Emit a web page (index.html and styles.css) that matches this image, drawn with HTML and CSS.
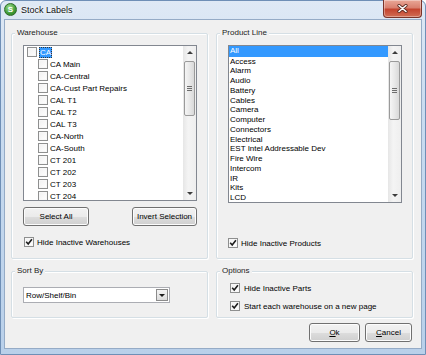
FILE: index.html
```html
<!DOCTYPE html>
<html lang="en">
<head>
  <meta charset="UTF-8" />
  <title>Stock Labels</title>
  <link rel="stylesheet" href="styles.css">
</head>
<body>
  <div class="window">
    <div class="titlebar">
      <span class="app-icon">S</span>
      <span class="title">Stock Labels</span>
      <button class="close" type="button">
        <svg width="11" height="9" viewBox="0 0 11 9">
          <path d="M2 1.5 L9 7.5 M9 1.5 L2 7.5" stroke="#5a2a22" stroke-width="3.2" stroke-linecap="round" fill="none"/>
          <path d="M2 1.5 L9 7.5 M9 1.5 L2 7.5" stroke="#fff" stroke-width="1.6" stroke-linecap="round" fill="none"/>
        </svg>
      </button>
    </div>

    <div class="client">
      <div class="row top-row">
        <!-- Warehouse -->
        <div class="group group-tall">
          <span class="group-label">Warehouse</span>
          <div class="group-body">
            <div class="listbox wh-list">
              <ul class="items">
                <li class="wh-item root"><span class="box"></span><span class="sel">CA</span></li>
                <li class="wh-item"><span class="box"></span>CA Main</li>
                <li class="wh-item"><span class="box"></span>CA-Central</li>
                <li class="wh-item"><span class="box"></span>CA-Cust Part Repairs</li>
                <li class="wh-item"><span class="box"></span>CAL T1</li>
                <li class="wh-item"><span class="box"></span>CAL T2</li>
                <li class="wh-item"><span class="box"></span>CAL T3</li>
                <li class="wh-item"><span class="box"></span>CA-North</li>
                <li class="wh-item"><span class="box"></span>CA-South</li>
                <li class="wh-item"><span class="box"></span>CT 201</li>
                <li class="wh-item"><span class="box"></span>CT 202</li>
                <li class="wh-item"><span class="box"></span>CT 203</li>
                <li class="wh-item"><span class="box"></span>CT 204</li>
              </ul>
              <div class="scrollbar">
                <span class="arrow up"></span>
                <span class="thumb thumb-wh"><span class="grip"></span></span>
                <span class="arrow down"></span>
              </div>
            </div>
            <div class="btn-row">
              <button class="btn btn-select" type="button">Select All</button>
              <button class="btn btn-invert" type="button">Invert Selection</button>
            </div>
            <label class="check wh-hide">
              <span class="box"><svg width="8" height="8" viewBox="0 0 8 8"><path d="M1.2 3.8 L3.2 6 L6.9 1.3" stroke="#1c1c1c" stroke-width="1.6" fill="none"/></svg></span>
              Hide Inactive Warehouses
            </label>
          </div>
        </div>

        <!-- Product Line -->
        <div class="group group-tall">
          <span class="group-label">Product Line</span>
          <div class="group-body">
            <div class="listbox pl-list">
              <ul class="items">
                <li class="pl-item selected">All</li>
                <li class="pl-item">Access</li>
                <li class="pl-item">Alarm</li>
                <li class="pl-item">Audio</li>
                <li class="pl-item">Battery</li>
                <li class="pl-item">Cables</li>
                <li class="pl-item">Camera</li>
                <li class="pl-item">Computer</li>
                <li class="pl-item">Connectors</li>
                <li class="pl-item">Electrical</li>
                <li class="pl-item">EST Intel Addressable Dev</li>
                <li class="pl-item">Fire Wire</li>
                <li class="pl-item">Intercom</li>
                <li class="pl-item">IR</li>
                <li class="pl-item">Kits</li>
                <li class="pl-item">LCD</li>
              </ul>
              <div class="scrollbar">
                <span class="arrow up"></span>
                <span class="thumb thumb-pl"><span class="grip"></span></span>
                <span class="arrow down"></span>
              </div>
            </div>
            <label class="check pl-hide">
              <span class="box"><svg width="8" height="8" viewBox="0 0 8 8"><path d="M1.2 3.8 L3.2 6 L6.9 1.3" stroke="#1c1c1c" stroke-width="1.6" fill="none"/></svg></span>
              Hide Inactive Products
            </label>
          </div>
        </div>
      </div>

      <div class="row mid-row">
        <div class="group group-short">
          <span class="group-label">Sort By</span>
          <div class="group-body sort-body">
            <div class="combo">
              <span class="combo-text">Row/Shelf/Bin</span>
              <span class="combo-btn"><span class="tri"></span></span>
            </div>
          </div>
        </div>

        <div class="group group-short">
          <span class="group-label">Options</span>
          <div class="group-body options-body">
            <label class="check opt">
              <span class="box"><svg width="8" height="8" viewBox="0 0 8 8"><path d="M1.2 3.8 L3.2 6 L6.9 1.3" stroke="#1c1c1c" stroke-width="1.6" fill="none"/></svg></span>
              Hide Inactive Parts
            </label>
            <label class="check opt">
              <span class="box"><svg width="8" height="8" viewBox="0 0 8 8"><path d="M1.2 3.8 L3.2 6 L6.9 1.3" stroke="#1c1c1c" stroke-width="1.6" fill="none"/></svg></span>
              Start each warehouse on a new page
            </label>
          </div>
        </div>
      </div>

      <div class="row dialog-buttons">
        <button class="btn btn-ok" type="button"><u>O</u>k</button>
        <button class="btn btn-cancel" type="button"><u>C</u>ancel</button>
      </div>
    </div>
  </div>
</body>
</html>
```

FILE: styles.css
```css
* {
  box-sizing: border-box;
}

body {
  margin: 0;
  font-family: "Liberation Sans", Arial, sans-serif;
  font-size: 8px;
  color: #000;
  background: #fff;
}

.window {
  width: 426px;
  height: 355px;
  border: 1px solid #6f8fb6;
  border-radius: 6px 6px 0 0;
  padding: 0 3px 5px 3px;
  background: linear-gradient(to bottom, #dfe9f5 0%, #cadcf0 30%, #b9d0ea 100%);
  display: flex;
  flex-direction: column;
}

/* title bar */
.titlebar {
  height: 18px;
  display: flex;
  align-items: flex-start;
}

.app-icon {
  width: 13px;
  height: 13px;
  margin-top: 2px;
  border-radius: 50%;
  border: 1px solid #2e6b2a;
  background: radial-gradient(circle at 40% 30%, #9fe08f, #3f9a36 60%, #2a7424);
  color: #fff;
  font-weight: bold;
  font-size: 8px;
  line-height: 11px;
  text-align: center;
}

.title {
  margin-left: 4px;
  font-size: 9px;
  line-height: 19px;
  color: #111;
  text-shadow: 0 0 5px #fff, 0 0 3px #fff;
}

.close {
  margin-left: auto;
  margin-top: -1px;
  width: 39px;
  height: 18px;
  padding: 0;
  border: 1px solid #7a3329;
  border-top: none;
  border-radius: 0 0 4px 4px;
  background: linear-gradient(to bottom, #e9a797 0%, #d9806f 45%, #c4442f 55%, #d16d54 100%);
  box-shadow: inset 0 0 0 1px rgba(255, 255, 255, 0.35);
  display: flex;
  align-items: center;
  justify-content: center;
}

/* client area */
.client {
  height: 330px;
  border: 1px solid #95abc6;
  background: #f0f0f0;
  padding: 8px 8px 6px 6px;
  display: flex;
  flex-direction: column;
}

.row {
  display: flex;
  gap: 8px;
}

.mid-row {
  margin-top: 7px;
}

/* group boxes */
.group {
  width: 197px;
  margin-top: 5px;
  border: 1px solid #d5dfe5;
  border-radius: 2px;
  box-shadow: inset 1px 1px 0 #fff, 1px 1px 0 #fff;
  display: flex;
  flex-direction: column;
}

.group-label {
  align-self: flex-start;
  margin: -6px 0 0 3px;
  padding: 0 2px;
  line-height: 10px;
  background: #f0f0f0;
  color: #1c1c1c;
}

.group-body {
  padding: 0 10px 0 11px;
}

.group-tall {
  height: 226px;
}

.group-short {
  height: 47px;
}

/* list boxes */
.listbox {
  display: flex;
  width: 174px;
  margin-top: 7px;
  border: 1px solid #828790;
  background: #fff;
  overflow: hidden;
}

.wh-list {
  height: 156px;
}

.pl-list {
  height: 158px;
}

.items {
  flex: 1;
  margin: 0;
  padding: 0;
  list-style: none;
  overflow: hidden;
}

.wh-item {
  height: 12px;
  display: flex;
  align-items: center;
  gap: 2px;
  padding-left: 14px;
  white-space: nowrap;
}

.wh-item.root {
  padding-left: 3px;
}

.sel {
  background: #3399ff;
  color: #fff;
  padding: 0 1px;
  line-height: 11px;
  outline: 1px dotted #333;
  outline-offset: -1px;
}

.pl-item {
  height: 9.75px;
  line-height: 9.75px;
  padding-left: 1px;
  white-space: nowrap;
}

.pl-item.selected {
  height: 10.5px;
  line-height: 10.5px;
  background: #3399ff;
  color: #fff;
}

/* scroll bars */
.scrollbar {
  width: 13px;
  display: flex;
  flex-direction: column;
  align-items: center;
  background: linear-gradient(to right, #e6e6e6, #f4f4f4 40%, #eeeeee);
}

.arrow {
  height: 13px;
  width: 13px;
  display: flex;
  align-items: center;
  justify-content: center;
}

.arrow::before {
  content: "";
  border-left: 3px solid transparent;
  border-right: 3px solid transparent;
}

.arrow.up::before {
  border-bottom: 3px solid #3c3c3c;
}

.arrow.down {
  margin-top: auto;
}

.arrow.down::before {
  border-top: 3px solid #3c3c3c;
}

.thumb {
  margin-top: 2px;
  width: 11px;
  border: 1px solid #9a9a9a;
  border-radius: 2px;
  background: linear-gradient(to right, #f5f5f5, #e8e8e8 50%, #d9d9d9);
  display: flex;
  align-items: center;
  justify-content: center;
}

.thumb-wh {
  height: 55px;
}

.thumb-pl {
  height: 59px;
}

.grip {
  width: 5px;
  height: 5px;
  background: repeating-linear-gradient(to bottom, #6d6d6d 0 1px, transparent 1px 2px);
}

/* buttons */
.btn-row {
  display: flex;
  justify-content: space-between;
  margin-top: 6px;
}

.btn {
  height: 19px;
  padding: 0;
  font-family: inherit;
  font-size: 8px;
  color: #000;
  border: 1px solid #707070;
  border-radius: 3px;
  background: linear-gradient(to bottom, #f2f2f2 0%, #ebebeb 50%, #dddddd 51%, #cfcfcf 100%);
  box-shadow: inset 0 0 0 1px #fcfcfc;
}

.btn-select {
  width: 66px;
}

.btn-invert {
  width: 65px;
}

.dialog-buttons {
  margin-top: 5px;
  justify-content: flex-end;
  gap: 5px;
  padding-right: 1px;
}

.btn-ok {
  width: 51px;
}

.btn-cancel {
  width: 47px;
}

/* check boxes */
.box {
  width: 10px;
  height: 10px;
  flex: none;
  border: 1px solid #8e8f8f;
  background: linear-gradient(135deg, #f0f0f0, #ffffff);
  box-shadow: inset 0 0 0 1px #f7f7f7;
  display: flex;
  align-items: center;
  justify-content: center;
}

.check {
  display: flex;
  align-items: center;
  gap: 3px;
  height: 12px;
  white-space: nowrap;
}

.wh-hide {
  margin-top: 10px;
  padding-left: 1px;
}

.pl-hide {
  margin-top: 34px;
}

.options-body {
  padding-left: 13px;
}

.opt {
  gap: 4px;
  margin-top: 6px;
}

/* combo box */
.sort-body {
  padding-top: 11px;
}

.combo {
  width: 147px;
  height: 16px;
  border: 1px solid #abadb3;
  background: #fff;
  display: flex;
  align-items: center;
}

.combo-text {
  flex: 1;
  padding-left: 2px;
}

.combo-btn {
  width: 12px;
  height: 12px;
  margin-right: 1px;
  border: 1px solid #8b8b8b;
  background: linear-gradient(to bottom, #f4f4f4, #dcdcdc);
  display: flex;
  align-items: center;
  justify-content: center;
}

.tri {
  border-left: 3px solid transparent;
  border-right: 3px solid transparent;
  border-top: 3px solid #1c1c1c;
}
```
